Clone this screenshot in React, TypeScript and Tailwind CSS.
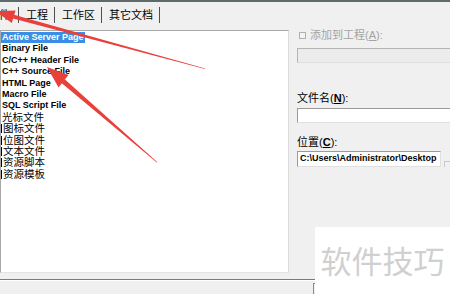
const items = [
  { label: 'Active Server Page', cjk: false },
  { label: 'Binary File', cjk: false },
  { label: 'C/C++ Header File', cjk: false },
  { label: 'C++ Source File', cjk: false },
  { label: 'HTML Page', cjk: false },
  { label: 'Macro File', cjk: false },
  { label: 'SQL Script File', cjk: false },
  { label: '光标文件', cjk: true },
  { label: '图标文件', cjk: true },
  { label: '位图文件', cjk: true },
  { label: '文本文件', cjk: true },
  { label: '资源脚本', cjk: true },
  { label: '资源模板', cjk: true },
]

const tabs = ['件', '工程', '工作区', '其它文档']

const cjkFont = "font-['Liberation_Sans','Noto_Sans_CJK_SC',sans-serif]"

export default function App() {
  return (
    <div className={`relative w-[450px] h-[294px] overflow-hidden bg-[#f0f0f0] ${cjkFont} text-black`}>
      {/* top edge */}
      <div className="h-[2px] bg-[#5f6b6b]" />

      {/* Tabs */}
      <div className="flex h-[26px] items-center text-[11px]">
        {tabs.map((t, i) => (
          <div key={t} className="flex items-center">
            <span className={i === 0 ? 'pr-[8px] -ml-[1px]' : 'pl-[7px] pr-[6px]'}>{t}</span>
            <span className="h-[16px] w-px bg-[#505050]" />
          </div>
        ))}
      </div>

      {/* Main area */}
      <div className="flex">
        {/* file type list */}
        <div className="mt-[2px] h-[243px] w-[290px] border border-[#a8a8a8] border-r-[#dcdcdc] border-b-[#e4e4e4] bg-white pt-[1px]">
          {items.map((it, i) => (
            <div key={it.label} className="flex h-[11.4px] items-center">
              {it.cjk && i > 7 && <span className="h-[9px] w-px bg-black" />}
              <span
                className={
                  (it.cjk
                    ? 'text-[10.5px] leading-[11.4px] pl-[1px]'
                    : "font-['Liberation_Sans',sans-serif] text-[9px] font-bold leading-[11.4px] px-[1px]") +
                  (i === 0 ? ' bg-[#3a8ee6] text-white' : '')
                }
              >
                {it.label}
              </span>
            </div>
          ))}
        </div>

        {/* right panel */}
        <div className="ml-[8px] flex-1 text-[11px]">
          <div className="mt-[1px] flex h-[12px] items-center gap-[4px] text-[#a3a3a3]">
            <span className="ml-[2px] h-[7px] w-[7px] border border-[#b0b0b0] bg-[#f4f4f4]" />
            <span>
              添加到工程(<span className="underline">A</span>):
            </span>
          </div>
          <div className="mt-[7px] h-[15px] border border-[#b4b4b4] border-b-[#dedede] border-r-0 bg-[#ececec]" />

          <div className="mt-[29px] leading-[12px]">
            文件名(<span className="underline font-bold">N</span>):
          </div>
          <div className="mt-[4px] h-[15px] border border-[#9a9a9a] border-b-[#e0e0e0] border-r-0 bg-white" />

          <div className="mt-[13px] leading-[12px]">
            位置(<span className="underline font-bold">C</span>):
          </div>
          <div className="mt-[3px] flex items-center">
            <div className="flex h-[16px] w-[144px] items-center border border-[#9a9a9a] border-b-[#e0e0e0] border-r-[#e0e0e0] bg-white pl-[2px] font-['Liberation_Sans',sans-serif] text-[9px] font-bold">
              C:\Users\Administrator\Desktop
            </div>
            <div className="ml-[3px] mt-[10px] h-[6px] w-[6px] border-l border-t border-[#c8c8c8]" />
          </div>
        </div>
      </div>

      {/* bottom separator */}
      <div className="mt-[6px] h-[2px] border-t border-[#7a7a7a] bg-white" />
      <div className="ml-[313px] mt-[2px] h-[12px] w-[10px] border-l border-t border-[#8a8a8a]" />

      {/* watermark */}
      <div className="absolute left-[315px] top-[227px] flex h-[67px] w-[135px] items-center justify-center bg-white pb-[2px]">
        <span className="font-['Noto_Sans_CJK_SC',sans-serif] text-[31px] leading-none text-[#d0d0d0]">
          软件技巧
        </span>
      </div>

      {/* annotation arrows */}
      <svg className="pointer-events-none absolute left-0 top-0" width="450" height="294" viewBox="0 0 450 294">
        <g fill="#e8403a">
          <polygon points="205,69 205.2,68.4 13.9,14.8 12.9,18.6" />
          <polygon points="-5,11 15.6,10.6 11.8,23" />
          <polygon points="157.2,162 156.8,162.4 61.5,83 64.7,79.2" />
          <polygon points="47,67 68.5,75 58.5,87.5" />
        </g>
      </svg>
    </div>
  )
}
